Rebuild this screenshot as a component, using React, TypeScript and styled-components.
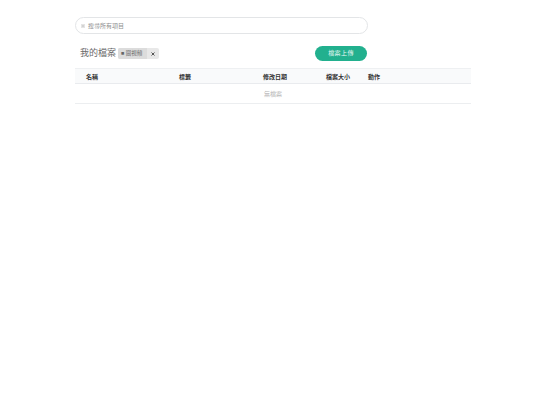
import React from "react";
import styled, { createGlobalStyle } from "styled-components";

const Global = createGlobalStyle`
  html, body { margin: 0; padding: 0; background: #fff; }
  body { font-family: "Liberation Sans", "Noto Sans CJK TC", sans-serif; }
`;

const Page = styled.div`
  width: 396px;
  margin-left: 75px;
  padding-top: 17px;
`;

const SearchBox = styled.div`
  width: 293px;
  height: 17px;
  box-sizing: border-box;
  border: 1px solid #e3e5e7;
  border-radius: 9px;
  display: flex;
  align-items: center;
  gap: 3px;
  padding-left: 5px;
  font-size: 6px;
  color: #8f8f8f;
`;

const SearchIcon = styled.svg`
  width: 4px;
  height: 6px;
  flex: none;
`;

const TitleRow = styled.div`
  width: 292px;
  height: 16px;
  margin-top: 11px;
  padding-left: 5px;
  box-sizing: border-box;
  display: flex;
  align-items: center;
`;

const Title = styled.div`
  font-size: 9px;
  color: #6a6a6a;
  line-height: 16px;
`;

const Tag = styled.div`
  margin: 1px 0 0 2px;
  height: 11px;
  display: flex;
  border-radius: 2px;
  overflow: hidden;
  background: #e8e8e8;
  font-size: 5.5px;
  line-height: 11px;
  color: #666;
`;

const TagLabel = styled.span`
  width: 29px;
  box-sizing: border-box;
  padding-left: 3px;
  background: #dcdcdc;
  white-space: nowrap;
`;

const TagClose = styled.span`
  width: 12px;
  display: flex;
  align-items: center;
  justify-content: center;
`;

const CloseIcon = styled.svg`
  width: 4px;
  height: 4px;
`;

const UploadButton = styled.div`
  margin-left: auto;
  width: 52px;
  height: 15px;
  border-radius: 8px;
  background: #22b08e;
  color: #e8f8f3;
  font-size: 6px;
  line-height: 15px;
  text-align: center;
  letter-spacing: 0.4px;
`;

const Table = styled.div`
  margin-top: 7px;
`;

const HeaderRow = styled.div`
  height: 16px;
  box-sizing: border-box;
  background: #f9fafb;
  border-top: 1px solid #eef0f2;
  border-bottom: 1px solid #e9ebee;
  display: flex;
  align-items: center;
  font-size: 6px;
  font-weight: 700;
  color: #333;
`;

const HeaderCell = styled.div<{ $w: number }>`
  width: ${(p) => p.$w}px;
  flex: none;
`;

const EmptyRow = styled.div`
  height: 20px;
  box-sizing: border-box;
  border-bottom: 1px solid #eceef0;
  display: flex;
  align-items: center;
  justify-content: center;
  font-size: 6px;
  color: #b4b4b4;
`;

const Spacer = styled.div`
  width: 11px;
  flex: none;
`;

export default function App() {
  return (
    <>
      <Global />
      <Page>
        <SearchBox>
          <SearchIcon viewBox="0 0 4 6">
            <path d="M1 1v4M3 1v4M1 3h2" stroke="#aaa" strokeWidth="0.6" fill="none" />
          </SearchIcon>
          搜尋所有項目
        </SearchBox>
        <TitleRow>
          <Title>我的檔案</Title>
          <Tag>
            <TagLabel>■ 圖視頻</TagLabel>
            <TagClose>
              <CloseIcon viewBox="0 0 4 4">
                <path d="M0.5 0.5L3.5 3.5M3.5 0.5L0.5 3.5" stroke="#555" strokeWidth="1" fill="none" />
              </CloseIcon>
            </TagClose>
          </Tag>
          <UploadButton>檔案上傳</UploadButton>
        </TitleRow>
        <Table>
          <HeaderRow>
            <Spacer />
            <HeaderCell $w={93}>名稱</HeaderCell>
            <HeaderCell $w={84}>標籤</HeaderCell>
            <HeaderCell $w={63}>修改日期</HeaderCell>
            <HeaderCell $w={42}>檔案大小</HeaderCell>
            <HeaderCell $w={30}>動作</HeaderCell>
          </HeaderRow>
          <EmptyRow>無檔案</EmptyRow>
        </Table>
      </Page>
    </>
  );
}
